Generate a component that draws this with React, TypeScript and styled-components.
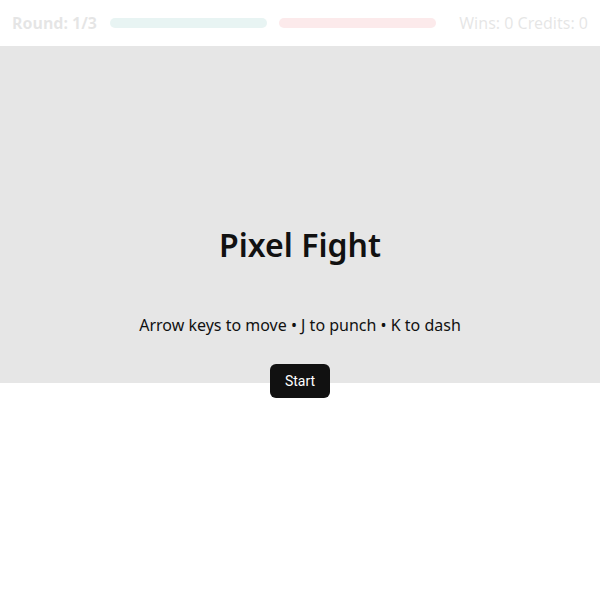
import styled, { createGlobalStyle } from "styled-components";

const GlobalStyle = createGlobalStyle`
  body {
    margin: 0;
    background: #ffffff;
    font-family: "Noto Sans", "Open Sans", sans-serif;
    color: #111111;
  }
`;

export default function App() {
  return (
    <>
      <GlobalStyle />
      <Page>
        <Header>
          <RoundLabel>Round: 1/3</RoundLabel>
          <Bars>
            <HealthBar $color="#2a9d8f" />
            <HealthBar $color="#e63946" />
          </Bars>
          <Stats>Wins: 0 Credits: 0</Stats>
        </Header>
        <Stage>
          <Title>Pixel Fight</Title>
          <Controls>Arrow keys to move • J to punch • K to dash</Controls>
          <StartButton>Start</StartButton>
        </Stage>
      </Page>
    </>
  );
}

const Page = styled.div`
  width: 600px;
  min-height: 600px;
  background: #ffffff;
`;

const Header = styled.div`
  display: flex;
  align-items: center;
  height: 46px;
  padding: 0 12px;
  box-sizing: border-box;
  opacity: 0.1;
`;

const RoundLabel = styled.div`
  font-weight: 700;
  font-size: 16px;
  white-space: nowrap;
`;

const Bars = styled.div`
  display: flex;
  gap: 12px;
  margin-left: 13px;
`;

const HealthBar = styled.div<{ $color: string }>`
  width: 157px;
  height: 10px;
  border-radius: 5px;
  background: ${(p) => p.$color};
`;

const Stats = styled.div`
  font-size: 16px;
  white-space: nowrap;
  margin-left: auto;
`;

const Stage = styled.div`
  height: 337px;
  box-sizing: border-box;
  padding-top: 179px;
  background: #e6e6e6;
  display: flex;
  flex-direction: column;
  align-items: center;
`;

const Title = styled.h1`
  margin: 0;
  font-size: 32px;
  line-height: 40px;
  font-weight: 600;
`;

const Controls = styled.p`
  margin: 48px 0 0;
  font-size: 16px;
  line-height: 24px;
`;

const StartButton = styled.button`
  margin-top: 27px;
  flex-shrink: 0;
  height: 34px;
  padding: 0 15px;
  border: none;
  border-radius: 6px;
  background: #111111;
  color: #ffffff;
  font-family: Roboto, "Liberation Sans", sans-serif;
  font-size: 14px;
  cursor: pointer;
`;
